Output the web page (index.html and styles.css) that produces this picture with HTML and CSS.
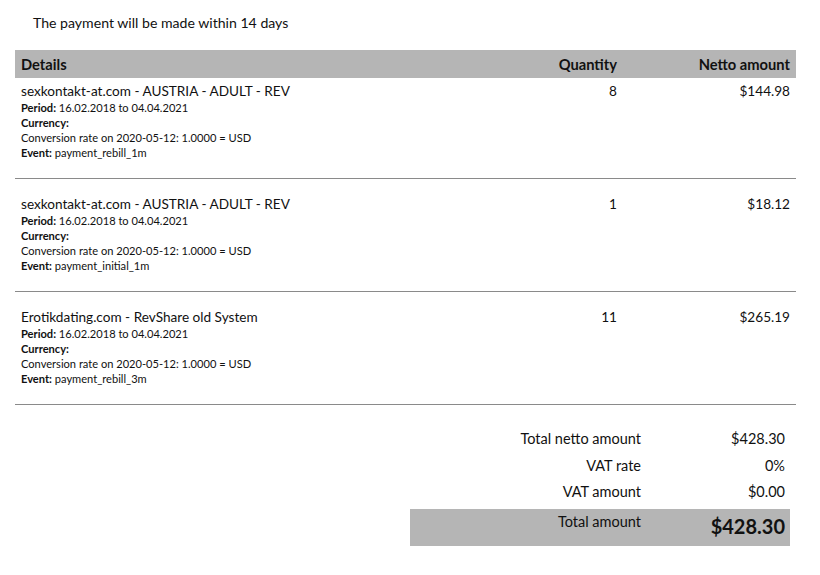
FILE: index.html
```html
<!DOCTYPE html>
<html>
<head>
<meta charset="utf-8">
<link rel="stylesheet" href="styles.css">
</head>
<body>
<p class="notice">The payment will be made within 14 days</p>
<div class="items">
  <div class="row head">
    <div class="c-details">Details</div>
    <div class="c-qty">Quantity</div>
    <div class="c-amt">Netto amount</div>
  </div>
  <div class="row item first">
    <div class="c-details">
      <div class="title">sexkontakt-at.com - AUSTRIA - ADULT - REV</div>
      <div class="meta"><b>Period:</b> 16.02.2018 to 04.04.2021</div>
      <div class="meta"><b>Currency:</b></div>
      <div class="meta">Conversion rate on 2020-05-12: 1.0000 = USD</div>
      <div class="meta"><b>Event:</b> payment_rebill_1m</div>
    </div>
    <div class="c-qty">8</div>
    <div class="c-amt">$144.98</div>
  </div>
  <div class="row item">
    <div class="c-details">
      <div class="title">sexkontakt-at.com - AUSTRIA - ADULT - REV</div>
      <div class="meta"><b>Period:</b> 16.02.2018 to 04.04.2021</div>
      <div class="meta"><b>Currency:</b></div>
      <div class="meta">Conversion rate on 2020-05-12: 1.0000 = USD</div>
      <div class="meta"><b>Event:</b> payment_initial_1m</div>
    </div>
    <div class="c-qty">1</div>
    <div class="c-amt">$18.12</div>
  </div>
  <div class="row item">
    <div class="c-details">
      <div class="title">Erotikdating.com - RevShare old System</div>
      <div class="meta"><b>Period:</b> 16.02.2018 to 04.04.2021</div>
      <div class="meta"><b>Currency:</b></div>
      <div class="meta">Conversion rate on 2020-05-12: 1.0000 = USD</div>
      <div class="meta"><b>Event:</b> payment_rebill_3m</div>
    </div>
    <div class="c-qty">11</div>
    <div class="c-amt">$265.19</div>
  </div>
</div>
<div class="totals">
  <div class="trow"><div class="tl">Total netto amount</div><div class="tv">$428.30</div></div>
  <div class="trow"><div class="tl">VAT rate</div><div class="tv">0%</div></div>
  <div class="trow"><div class="tl">VAT amount</div><div class="tv">$0.00</div></div>
  <div class="trow grand"><div class="tl">Total amount</div><div class="tv">$428.30</div></div>
</div>
</body>
</html>
```
FILE: styles.css
```css
html, body {
  margin: 0;
  padding: 0;
  background: #fff;
}
body {
  font-family: "Lato", "Noto Sans", sans-serif;
  color: #111;
}
.notice {
  margin: 0;
  padding: 13px 0 0 33px;
  height: 37px;
  font-size: 14.1px;
  line-height: 20px;
}
.items {
  margin-left: 15px;
  width: 781px;
}
.row {
  display: grid;
  grid-template-columns: 1fr 120px 173px;
}
.row > div {
  padding: 0 6px;
}
.c-qty, .c-amt {
  text-align: right;
}
.head {
  background: #b5b5b5;
  height: 28px;
  align-items: center;
  font-weight: 700;
  font-size: 14.7px;
}
.item {
  padding: 17px 0 18px;
  border-bottom: 1px solid #8a8a8a;
  font-size: 13.6px;
  line-height: 17px;
}
.item.first {
  padding-top: 5px;
}
.title {
  font-size: 13.6px;
  line-height: 17px;
}
.meta {
  font-size: 11.1px;
  line-height: 15px;
}
.meta b {
  font-weight: 700;
}
.totals {
  margin: 24px 0 0 410px;
  width: 380px;
}
.trow {
  display: grid;
  grid-template-columns: 1fr 143px;
  height: 26.5px;
  font-size: 14.5px;
  line-height: 20px;
}
.tl {
  text-align: right;
  padding-right: 6px;
}
.tv {
  text-align: right;
  padding-right: 5px;
}
.grand {
  background: #b5b5b5;
  height: 37px;
  line-height: 26px;
}
.grand .tv {
  font-size: 20px;
  font-weight: 700;
  line-height: 34px;
}
```
